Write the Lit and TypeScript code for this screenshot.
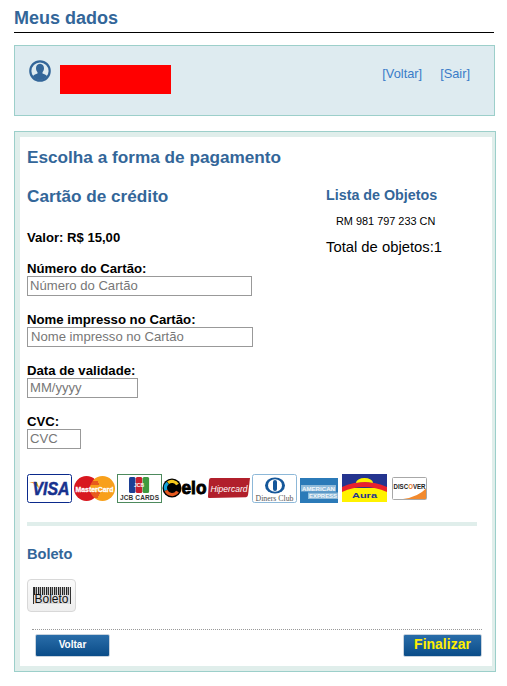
import { LitElement, html, css, svg } from "lit";
import { customElement } from "lit/decorators.js";

const visa = svg`<svg class="l" width="45" height="29" viewBox="0 0 45 29"><rect x=".5" y=".5" width="44" height="28" rx="2" fill="#fff" stroke="#0b2a8c"/><path d="M2 8h8l3 8c-2-4-6-7-11-8z" fill="#f2a32c"/><text x="24" y="21" text-anchor="middle" textLength="37" lengthAdjust="spacingAndGlyphs" font-family="Liberation Sans" font-weight="700" font-style="italic" font-size="17.5" stroke="#17318e" stroke-width=".5" fill="#17318e">VISA</text></svg>`;
const mc = svg`<svg class="l" width="41" height="25" viewBox="0 0 41 25"><circle cx="12.5" cy="12.5" r="12.5" fill="#d8171f"/><circle cx="28.5" cy="12.5" r="12.5" fill="#f8a01b"/><path d="M17 6h7M16 8h9M15 17h11M16 19h9M17 21h7" stroke="#d8171f"/><text x="20.5" y="15.5" text-anchor="middle" textLength="38" lengthAdjust="spacingAndGlyphs" font-family="Liberation Sans" font-weight="700" font-size="7" stroke="#fff" stroke-width=".3" fill="#fff">MasterCard</text></svg>`;
const jcb = svg`<svg class="l" width="45" height="29" viewBox="0 0 45 29"><rect x=".5" y=".5" width="44" height="28" fill="#fff" stroke="#4d8a5d"/><rect x="12" y="3" width="6.500" height="16" rx="1.500" fill="#1c3f94"/><rect x="18.800" y="3" width="6.500" height="16" rx="1.500" fill="#c8202f"/><rect x="25.600" y="3" width="6.500" height="16" rx="1.500" fill="#3f9a40"/><text x="22" y="13" text-anchor="middle" font-family="Liberation Sans" font-weight="700" font-size="5" fill="#fff">JCB</text><text x="22.500" y="26" text-anchor="middle" textLength="39" font-family="Liberation Sans" font-weight="700" font-size="6.500" fill="#333">JCB CARDS</text></svg>`;
const elo = svg`<svg class="l" width="45" height="20" viewBox="0 0 45 20"><circle cx="10" cy="10" r="9.500" fill="#000"/><path d="M6 4.800A6.500 6.500 0 0 1 15.500 6.500" fill="none" stroke="#f5c81c" stroke-width="3.200"/><path d="M5.800 5A6.500 6.500 0 0 0 4 12.500" fill="none" stroke="#13a3d8" stroke-width="3.200"/><path d="M4 12.500A6.500 6.500 0 0 0 15.500 13.500" fill="none" stroke="#e5591f" stroke-width="3.200"/><text x="32" y="15.500" text-anchor="middle" textLength="25" lengthAdjust="spacingAndGlyphs" font-family="Liberation Sans" font-weight="700" font-size="18" stroke="#000" stroke-width=".9" fill="#000">elo</text></svg>`;
const hiper = svg`<svg class="l" width="42" height="20" viewBox="0 0 42 20"><path d="M3 0h39l-2 17q-.4 2-2 2.300L1 20q-1 0-1-1.500L1 2q.3-2 2-2z" fill="#b11f2b"/><text x="21" y="13.500" text-anchor="middle" textLength="37" lengthAdjust="spacingAndGlyphs" font-family="Liberation Sans" font-style="italic" font-size="8.800" fill="#fff">Hipercard</text></svg>`;
const diners = svg`<svg class="l" width="45" height="29" viewBox="0 0 45 29"><rect x=".5" y=".5" width="44" height="28" rx="2" fill="#fff" stroke="#8db8d8"/><ellipse cx="23" cy="11.500" rx="10" ry="8" fill="#15579a"/><ellipse cx="23" cy="11.500" rx="7" ry="6.200" fill="#fff"/><rect x="21" y="6" width="4" height="11" rx="2" fill="#15579a"/><text x="22.500" y="26.500" text-anchor="middle" textLength="38" lengthAdjust="spacingAndGlyphs" font-family="Liberation Serif" font-size="8.500" fill="#555">Diners Club</text></svg>`;
const amex = svg`<svg class="l amex" width="38" height="25" viewBox="0 0 38 25"><rect width="38" height="25" fill="#2b7ab8"/><rect x="1" y="7" width="35" height="6.500" fill="#8fbad9"/><rect x="8" y="14.500" width="30" height="6.500" fill="#8fbad9"/><text x="18.500" y="12.500" text-anchor="middle" textLength="33" lengthAdjust="spacingAndGlyphs" font-family="Liberation Sans" font-weight="700" font-size="5.500" fill="#f3f8fb">AMERICAN</text><text x="23" y="20" text-anchor="middle" textLength="28" lengthAdjust="spacingAndGlyphs" font-family="Liberation Sans" font-weight="700" font-size="5.500" fill="#f3f8fb">EXPRESS</text></svg>`;
const aura = svg`<svg class="l" width="45" height="28" viewBox="0 0 45 28"><rect width="45" height="28" fill="#fff200"/><rect width="45" height="14" fill="#24348f"/><path d="M0 13q22-10 45 0v5Q22 8 0 18z" fill="#e8222d"/><path d="M14 9a8.500 5 0 0 1 17 0q-8-2-17 0z" fill="#fff200"/><text x="22.500" y="24" text-anchor="middle" textLength="25" lengthAdjust="spacingAndGlyphs" font-family="Liberation Sans" font-weight="700" font-size="7" fill="#24348f">Aura</text></svg>`;
const discover = svg`<svg class="l" width="35" height="23" viewBox="0 0 35 23"><rect x=".5" y=".5" width="34" height="22" rx="1" fill="#fff" stroke="#a8a8a8"/><path d="M34 11.500v10.500H11q15-2 23-10.500z" fill="#f28a2e"/><text x="17.500" y="12" text-anchor="middle" textLength="32" lengthAdjust="spacingAndGlyphs" font-family="Liberation Sans" font-weight="700" font-size="6.300" fill="#222">DISC<tspan fill="#e8761e">O</tspan>VER</text></svg>`;

@customElement("app-root")
export class AppRoot extends LitElement {
  static styles = css`
    :host { display: block; width: 507px; height: 686px; overflow: hidden; background: #fff; font-family: "Liberation Sans", Arial, sans-serif; font-size: 14px; color: #000; }
    .page { padding: 8px 11px 0 14px; }
    .title { margin: 0; width: 480px; height: 24px; border-bottom: 1px solid #000; font-size: 18px; line-height: 20px; font-weight: 700; color: #336699; }
    .user { box-sizing: border-box; width: 481px; height: 71px; margin-top: 12px; border: 1px solid #9ccfca; background: #deebf0; display: flex; }
    .avatar { margin: 14px 0 0 14px; }
    .mask { width: 111px; height: 29px; margin: 19px 0 0 9px; background: #f00; }
    .links { margin: 20px 24px 0 auto; display: flex; gap: 18px; font-size: 12.8px; line-height: 16px; color: #3a7cc8; }
    .panel { box-sizing: border-box; width: 482px; height: 541px; margin-top: 15px; border: 1px solid #9ccfca; padding: 5px 3px 5px 5px; background: #e0eeeb; }
    .inner { background: #fff; height: 100%; padding: 10px 0 0 7px; box-sizing: border-box; }
    h2 { margin: 0; font-size: 17.2px; line-height: 20px; font-weight: 700; color: #336699; }
    .cols { display: flex; margin-top: 19px; height: 270px; }
    .left { width: 299px; }
    .valor { margin-top: 24px; font-size: 13.100px; line-height: 16px; font-weight: 700; }
    .field { margin-top: 16px; display: flex; flex-direction: column; align-items: flex-start; }
    .field label { font-size: 13.200px; line-height: 14px; font-weight: 700; }
    .field + .field { margin-top: 17px; }
    .field input { box-sizing: border-box; height: 20px; padding: 0 2px 2px; border: 1px solid #999; font: 13.100px "Liberation Sans", Arial, sans-serif; color: #333; background: #fff; outline: none; }
    .field input.wide { width: 225px; }
    .field input.name { width: 226px; padding-left: 3px; }
    .field input.date { width: 111px; }
    .field input.cvc { width: 54px; }
    input::placeholder { color: #777; opacity: 1; }
    .right { padding-top: 1px; }
    .right h3 { margin: 0; font-size: 14.300px; line-height: 16px; font-weight: 700; color: #336699; }
    .obj { margin: 11px 0 0 10px; font-size: 10.900px; line-height: 14px; }
    .total { margin-top: 10px; font-size: 14.800px; line-height: 18px; white-space: nowrap; }
    .logos { display: flex; align-items: center; height: 32px; margin-top: 16px; }
    .l { display: block; flex: none; }
    .l + .l { margin-left: 2px; }
    .l:nth-child(4) { margin-left: 0; }
    .l:nth-child(5) { margin-left: 1px; }
    .l:nth-child(7) { margin-left: 3px; margin-top: 5px; }
    .l:nth-child(8) { margin-left: 4px; }
    .l:nth-child(9) { margin-left: 5px; }
    .sep { width: 450px; height: 4px; margin-top: 18px; background: #e0eeeb; }
    .boleto-t { margin: 20px 0 0; font-size: 14.600px; line-height: 16px; font-weight: 700; color: #336699; }
    .boleto { box-sizing: border-box; width: 49px; height: 33px; margin-top: 17px; border: 1px solid #d8d8d8; border-radius: 4px; background: linear-gradient(#fafafa, #eee); display: flex; justify-content: center; align-items: center; }
    .bar { box-sizing: border-box; width: 38px; height: 17px; border: solid #333; border-width: 0 1px; font-size: 12px; line-height: 10px; color: #111; text-align: center; display: flex; flex-direction: column; justify-content: flex-end; background: repeating-linear-gradient(90deg, #222 0 1px, #aaa 1px 2px, #333 2px 3px, #ddd 3px 4px) top / 100% 8px no-repeat, #dcdcdc; }
    .actions { width: 450px; margin: 17px 0 0 5px; padding: 4px 0 0 3px; border-top: 1px dotted #999; box-sizing: border-box; display: flex; justify-content: space-between; align-items: center; }
    .btn { box-sizing: border-box; height: 23px; border: 1px solid #c8d3de; border-radius: 2px; background: linear-gradient(#2a6da9, #0a4c88); color: #fff; font: 700 10px "Liberation Sans", Arial, sans-serif; display: flex; align-items: center; justify-content: center; padding: 0 0 3px; }
    .back { width: 75px; }
    .finish { width: 79px; color: #ffee00; font-size: 14px; }
  `;

  render() {
    return html`<div class="page">
      <h1 class="title">Meus dados</h1>
      <div class="user">
        <svg class="avatar" width="22" height="22" viewBox="0 0 22 22"><circle cx="11" cy="11" r="9.700" fill="none" stroke="#336699" stroke-width="2.200"/><path d="M11 3.800c2.800 0 4.100 2.200 4 4.700-.1 1.700-.8 3-1.500 3.800v1.300c1.700.8 3.500 1.300 4.700 2.600A9.500 9.500 0 0 1 11 20a9.500 9.500 0 0 1-7.200-3.800c1.200-1.300 3-1.800 4.700-2.600v-1.300C7.800 11.500 7.100 10.200 7 8.500c-.1-2.500 1.200-4.700 4-4.700z" fill="#336699"/></svg>
        <div class="mask"></div>
        <div class="links"><span>[Voltar]</span><span>[Sair]</span></div>
      </div>
      <div class="panel"><div class="inner">
        <h2>Escolha a forma de pagamento</h2>
        <div class="cols">
          <div class="left">
            <h2>Cartão de crédito</h2>
            <div class="valor">Valor: R$ 15,00</div>
            <div class="field"><label>Número do Cartão:</label><input class="wide" placeholder="Número do Cartão"></div>
            <div class="field"><label>Nome impresso no Cartão:</label><input class="name" placeholder="Nome impresso no Cartão"></div>
            <div class="field"><label>Data de validade:</label><input class="date" placeholder="MM/yyyy"></div>
            <div class="field"><label>CVC:</label><input class="cvc" placeholder="CVC"></div>
          </div>
          <div class="right">
            <h3>Lista de Objetos</h3>
            <div class="obj">RM 981 797 233 CN</div>
            <div class="total">Total de objetos:1</div>
          </div>
        </div>
        <div class="logos">${visa}${mc}${jcb}${elo}${hiper}${diners}${amex}${aura}${discover}</div>
        <div class="sep"></div>
        <div class="boleto-t">Boleto</div>
        <div class="boleto"><div class="bar">Boleto</div></div>
        <div class="actions"><button class="btn back">Voltar</button><button class="btn finish">Finalizar</button></div>
      </div></div>
    </div>`;
  }
}
